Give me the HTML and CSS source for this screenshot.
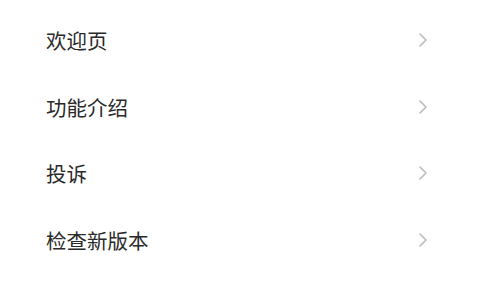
FILE: index.html
```html
<!DOCTYPE html>
<html lang="zh-CN">
<head>
  <meta charset="UTF-8">
  <meta name="viewport" content="width=device-width, initial-scale=1.0">
  <title>设置</title>
  <link rel="stylesheet" href="styles.css">
</head>
<body>

  <ul class="menu">
    <li class="item">
      <span>欢迎页</span>
      <svg class="arrow" viewBox="0 0 10 16"><path d="M2 2 L8 8 L2 14"/></svg>
    </li>
    <li class="item">
      <span>功能介绍</span>
      <svg class="arrow" viewBox="0 0 10 16"><path d="M2 2 L8 8 L2 14"/></svg>
    </li>
    <li class="item">
      <span>投诉</span>
      <svg class="arrow" viewBox="0 0 10 16"><path d="M2 2 L8 8 L2 14"/></svg>
    </li>
    <li class="item">
      <span>检查新版本</span>
      <svg class="arrow" viewBox="0 0 10 16"><path d="M2 2 L8 8 L2 14"/></svg>
    </li>
  </ul>

</body>
</html>
```

FILE: styles.css
```css
body {
  margin: 0;
  padding: 0;
  background-color: #fff;
  font-family: "Noto Sans CJK SC", "Noto Sans", sans-serif;
}
.menu {
  list-style: none;
  margin: 0;
  padding: 7px 0 0 0;
}
.item {
  height: 66.5px;
  display: flex;
  align-items: center;
  justify-content: space-between;
  padding: 0 52px 0 46px;
  font-size: 20.5px;
  color: #2a2a2a;
}
.arrow {
  width: 10px;
  height: 16px;
  fill: none;
  stroke: #bbb;
  stroke-width: 1.6;
  stroke-linecap: round;
  stroke-linejoin: round;
}
```
